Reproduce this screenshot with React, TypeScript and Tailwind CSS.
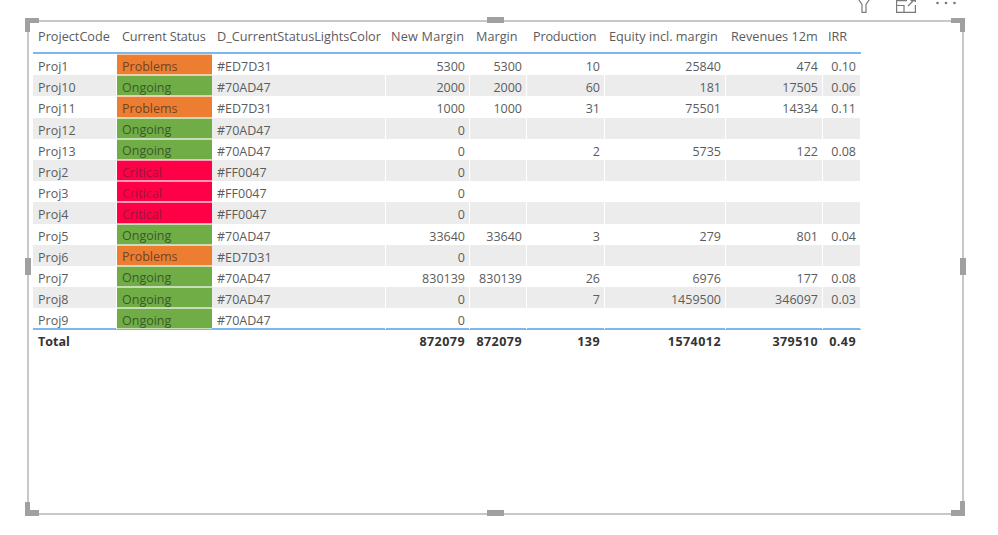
const rows = [
  ["Proj1", "Problems", "#ED7D31", "5300", "5300", "10", "25840", "474", "0.10"],
  ["Proj10", "Ongoing", "#70AD47", "2000", "2000", "60", "181", "17505", "0.06"],
  ["Proj11", "Problems", "#ED7D31", "1000", "1000", "31", "75501", "14334", "0.11"],
  ["Proj12", "Ongoing", "#70AD47", "0", "", "", "", "", ""],
  ["Proj13", "Ongoing", "#70AD47", "0", "", "2", "5735", "122", "0.08"],
  ["Proj2", "Critical", "#FF0047", "0", "", "", "", "", ""],
  ["Proj3", "Critical", "#FF0047", "0", "", "", "", "", ""],
  ["Proj4", "Critical", "#FF0047", "0", "", "", "", "", ""],
  ["Proj5", "Ongoing", "#70AD47", "33640", "33640", "3", "279", "801", "0.04"],
  ["Proj6", "Problems", "#ED7D31", "0", "", "", "", "", ""],
  ["Proj7", "Ongoing", "#70AD47", "830139", "830139", "26", "6976", "177", "0.08"],
  ["Proj8", "Ongoing", "#70AD47", "0", "", "7", "1459500", "346097", "0.03"],
  ["Proj9", "Ongoing", "#70AD47", "0", "", "", "", "", ""],
];

const headers = [
  { label: "ProjectCode", pad: "pl-[5px]" },
  { label: "Current Status", pad: "pl-[5px] tracking-[-0.15px]" },
  { label: "D_CurrentStatusLightsColor", pad: "pl-[5px]" },
  { label: "New Margin", pad: "pl-[5px] tracking-[0.2px]" },
  { label: "Margin", pad: "pl-[6px]" },
  { label: "Production", pad: "pl-[6px] tracking-[-0.2px]" },
  { label: "Equity incl. margin", pad: "pl-[4px]" },
  { label: "Revenues 12m", pad: "pl-[5px]" },
  { label: "IRR", pad: "pl-[5px]" },
];
const totals = ["Total", "", "", "872079", "872079", "139", "1574012", "379510", "0.49"];

const grid = "grid grid-cols-[84px_95px_174px_84px_57px_78px_121px_97px_38px]";

const statusBg: Record<string, string> = {
  Problems: "bg-[#ED7D31] text-[#6f4526]",
  Ongoing: "bg-[#70AD47] text-[#3a5a28]",
  Critical: "bg-[#FF0047] text-[#98173d]",
};

function Handle({ className }: { className: string }) {
  return <div className={"absolute bg-[#a0a0a0] " + className} />;
}

export default function App() {
  return (
    <div className="relative h-[535px] w-[998px] overflow-hidden bg-white font-['Open_Sans','Noto_Sans',sans-serif] text-[12.5px] text-[#5c5c5c]">
      <div className="absolute right-[42px] top-0 flex items-start text-[#7a7a7a]">
        <svg className="mr-[24px]" width="16" height="13" viewBox="0 0 16 13" fill="none" stroke="currentColor" strokeWidth="1.2">
          <path d="M1 -3 L6 4.5 V12.4 H10 V4.5 L15 -3" />
        </svg>
        <svg className="mr-[20px]" width="20" height="13" viewBox="0 0 20 13" fill="none" stroke="currentColor" strokeWidth="1.2">
          <path d="M11 0.6 H0.6 V12.4 H19.4 V5" />
          <path d="M0.6 5.5 H8 V12.4" />
          <path d="M12 6 L18 0 M14.5 0.6 H19.4 V2" />
        </svg>
        <svg width="20" height="13" viewBox="0 0 20 13" fill="currentColor">
          <circle cx="1.5" cy="3" r="1.3" />
          <circle cx="10" cy="3" r="1.3" />
          <circle cx="18.5" cy="3" r="1.3" />
        </svg>
      </div>

      <div className="relative ml-[27px] mt-[20px] h-[495px] w-[937px] border-2 border-[#c8c8c8] pl-[4px] pt-[3px]">
        <Handle className="-left-[4px] -top-[4px] h-[5px] w-[14px]" />
        <Handle className="-left-[4px] -top-[4px] h-[14px] w-[5px]" />
        <Handle className="-right-[3px] -top-[4px] h-[5px] w-[14px]" />
        <Handle className="-right-[3px] -top-[4px] h-[14px] w-[5px]" />
        <Handle className="-bottom-[3px] -left-[4px] h-[6px] w-[14px]" />
        <Handle className="-bottom-[3px] -left-[4px] h-[14px] w-[5px]" />
        <Handle className="-bottom-[3px] -right-[3px] h-[6px] w-[14px]" />
        <Handle className="-bottom-[3px] -right-[3px] h-[15px] w-[5px]" />
        <Handle className="left-[458px] -top-[5px] h-[6px] w-[17px]" />
        <Handle className="left-[458px] -bottom-[3px] h-[6px] w-[17px]" />
        <Handle className="-left-[4px] top-[236px] h-[17px] w-[6px]" />
        <Handle className="-right-[4px] top-[236px] h-[17px] w-[6px]" />

        <div className="w-[828px]">
          <div className={grid + " h-[29px] items-center border-b-2 border-[#7cb8ee] pb-[4px] text-[12.7px] leading-none"}>
            {headers.map((h) => (
              <div key={h.label} className={"whitespace-nowrap " + h.pad}>
                {h.label}
              </div>
            ))}
          </div>
          <div className="leading-[15px]">
            {rows.map((r, idx) => (
              <div key={r[0]} className={grid + " h-[21.2px] " + (idx % 2 === 1 ? "bg-[#ececec]" : "bg-white")}>
                {r.map((c, i) => {
                  if (i === 1) {
                    return (
                      <div key={i} className={"flex items-center border-y border-white/60 pl-[5px] pt-[3px] " + statusBg[c]}>
                        {c}
                      </div>
                    );
                  }
                  return (
                    <div key={i} className={"flex items-center border-r border-white pt-[4px] " + (i > 2 ? "justify-end pr-[4px]" : "pl-[5px]")}>
                      {c}
                    </div>
                  );
                })}
              </div>
            ))}
          </div>
          <div className={grid + " -mt-px h-[24px] items-center border-t-2 border-[#7cb8ee] pt-[2px] font-bold text-[#333333]"}>
            {totals.map((c, i) => (
              <div key={i} className={i > 2 ? "pr-[5px] text-right tracking-[0.45px]" : "pl-[5px]"}>
                {c}
              </div>
            ))}
          </div>
        </div>
      </div>
    </div>
  );
}
